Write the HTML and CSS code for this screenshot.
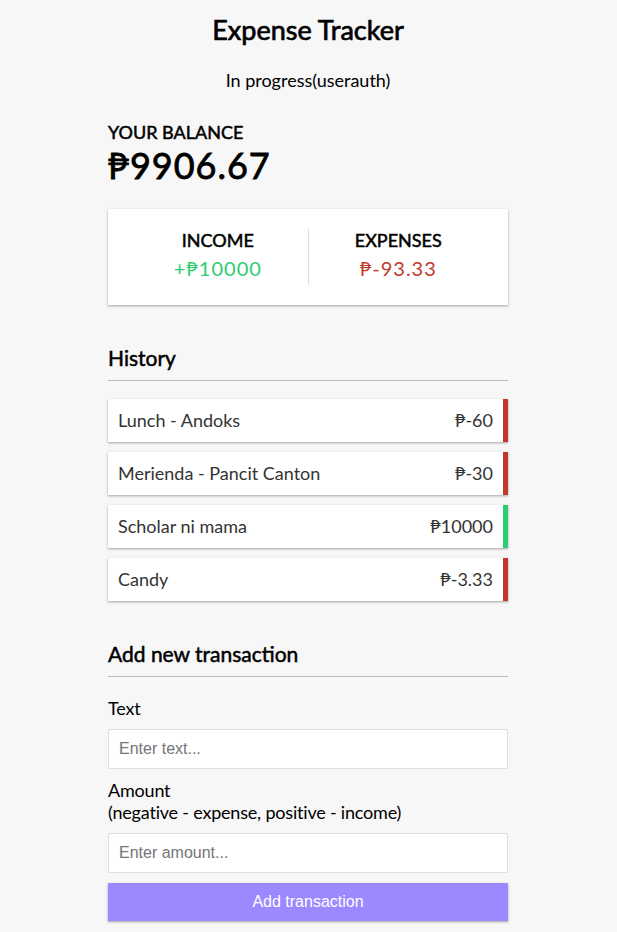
FILE: index.html
```html
<!DOCTYPE html>
<html lang="en">
<head>
<meta charset="UTF-8">
<title>Expense Tracker</title>
<link rel="stylesheet" href="styles.css">
</head>
<body>
  <h2 class="title">Expense Tracker</h2>
  <p class="status">In progress(userauth)</p>
  <div class="container">
    <h4>Your Balance</h4>
    <h1 class="balance">₱9906.67</h1>

    <div class="inc-exp-container">
      <div>
        <h4>Income</h4>
        <p class="money plus">+₱10000</p>
      </div>
      <div>
        <h4>Expenses</h4>
        <p class="money minus">₱-93.33</p>
      </div>
    </div>

    <h3>History</h3>
    <ul class="list">
      <li class="minus">Lunch - Andoks <span>₱-60</span></li>
      <li class="minus">Merienda - Pancit Canton <span>₱-30</span></li>
      <li class="plus">Scholar ni mama <span>₱10000</span></li>
      <li class="minus">Candy <span>₱-3.33</span></li>
    </ul>

    <h3>Add new transaction</h3>
    <form class="form">
      <div class="form-control">
        <label for="text">Text</label>
        <input type="text" id="text" placeholder="Enter text...">
      </div>
      <div class="form-control">
        <label for="amount">Amount <br>(negative - expense, positive - income)</label>
        <input type="number" id="amount" placeholder="Enter amount...">
      </div>
      <button class="btn" type="button">Add transaction</button>
    </form>
  </div>
</body>
</html>
```

FILE: styles.css
```css
* {
  box-sizing: border-box;
}

body {
  background-color: #f7f7f7;
  display: flex;
  flex-direction: column;
  align-items: center;
  margin: 0;
  padding-right: 1px;
  font-family: Lato, "Open Sans", sans-serif;
  font-size: 18px;
  color: #000;
}

h1, h2, h3, h4 {
  font-weight: 400;
  -webkit-text-stroke: 0.5px currentColor;
}

.title {
  font-size: 27px;
  line-height: 32px;
  margin: 14px 0 0;
  -webkit-text-stroke: 0.7px currentColor;
}

.status {
  margin: 23px 0 0;
  line-height: 22px;
}

.container {
  margin: 30px auto;
  width: 400px;
}

h1 {
  letter-spacing: 1px;
  margin: 0;
}

.balance {
  font-size: 36px;
  line-height: 44px;
  margin-bottom: 22px;
  -webkit-text-stroke: 0.8px currentColor;
}

h3 {
  border-bottom: 1px solid #bbb;
  padding-bottom: 10px;
  margin: 40px 0 10px;
  font-size: 21px;
  line-height: 25px;
}

h4 {
  margin: 0;
  text-transform: uppercase;
  font-size: 18px;
  line-height: 22px;
}

.inc-exp-container {
  background-color: #fff;
  box-shadow: 0 1px 3px rgba(0, 0, 0, 0.12), 0 1px 2px rgba(0, 0, 0, 0.24);
  padding: 20px;
  display: flex;
  justify-content: space-between;
  margin: 0 0 20px;
}

.inc-exp-container > div {
  flex: 1;
  text-align: center;
}

.inc-exp-container > div:first-of-type {
  border-right: 1px solid #dedede;
}

.money {
  font-size: 20px;
  line-height: 24px;
  letter-spacing: 1px;
  margin: 5px 0;
}

.money.plus {
  color: #2ecc71;
}

.money.minus {
  color: #c0392b;
}

.list {
  list-style-type: none;
  padding: 0;
  margin: 18px 0 40px;
}

.list li {
  background-color: #fff;
  box-shadow: 0 1px 3px rgba(0, 0, 0, 0.12), 0 1px 2px rgba(0, 0, 0, 0.24);
  color: #333;
  display: flex;
  justify-content: space-between;
  padding: 10px;
  margin: 10px 0;
  line-height: 23px;
}

.list li.plus {
  border-right: 5px solid #2ecc71;
}

.list li.minus {
  border-right: 5px solid #c0392b;
}

label {
  display: inline-block;
  margin: 10px 0;
  line-height: 22px;
  letter-spacing: -0.2px;
}

input {
  border: 1px solid #dedede;
  border-radius: 2px;
  display: block;
  font-size: 16px;
  font-family: "Liberation Sans", Arial, sans-serif;
  padding: 10px;
  width: 100%;
  height: 40px;
  background: #fff;
}

input::placeholder {
  color: #757575;
}

.btn {
  cursor: pointer;
  background-color: #9c88ff;
  box-shadow: 0 1px 3px rgba(0, 0, 0, 0.12), 0 1px 2px rgba(0, 0, 0, 0.24);
  color: #fff;
  border: 0;
  display: block;
  font-size: 16px;
  font-family: "Liberation Sans", Arial, sans-serif;
  margin: 10px 0 30px;
  padding: 10px;
  height: 38px;
  width: 100%;
}
```
